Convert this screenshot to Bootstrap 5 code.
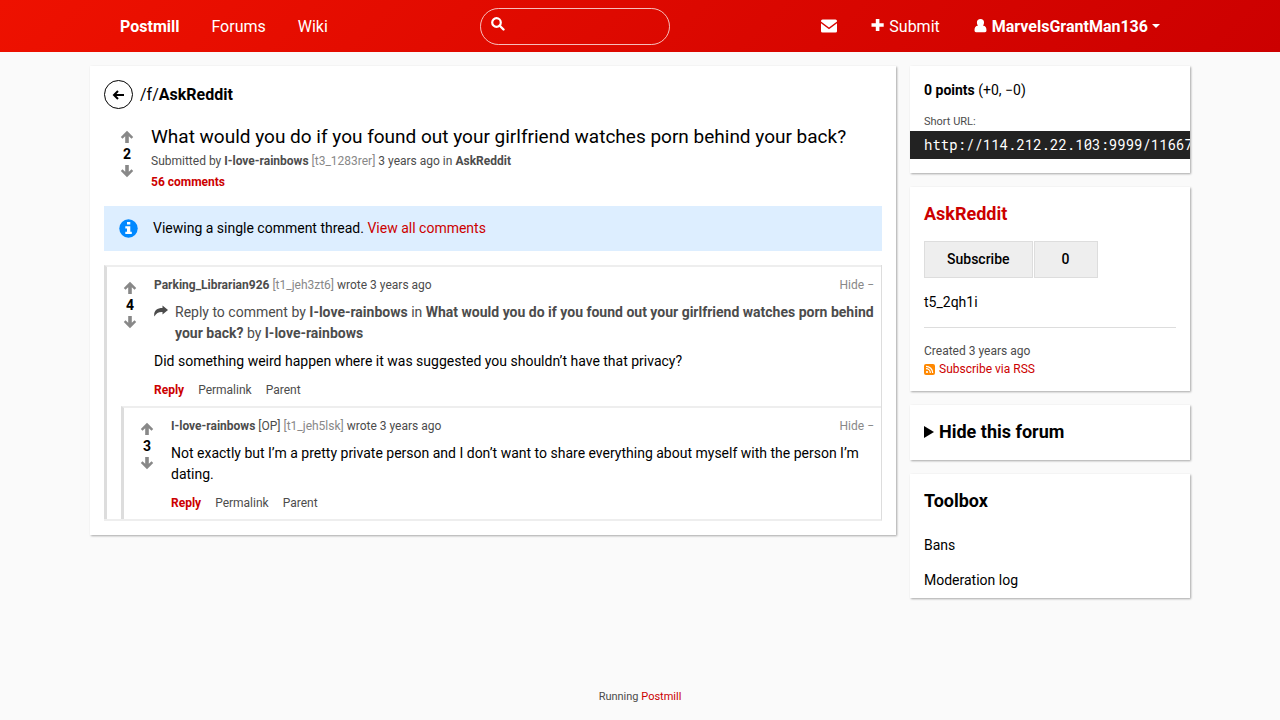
<!DOCTYPE html>
<html lang="en">
<head>
<meta charset="utf-8">
<meta name="viewport" content="width=device-width, initial-scale=1">
<title>AskReddit - Postmill</title>
<link href="https://cdn.jsdelivr.net/npm/bootstrap@5.3.0/dist/css/bootstrap.min.css" rel="stylesheet">
<style>
  body { font: 14px/21px Roboto, "Liberation Sans", sans-serif; color: #000; background: #fafafa; }
  a { color: #c00; text-decoration: none; }
  a:hover { text-decoration: underline; }
  b, strong { font-weight: 700; }
  svg { fill: currentColor; flex: none; }
  .wrap { max-width: 1100px; }
  .site-header { background: linear-gradient(135deg, #e10, #c00); font-size: 16px; min-height: 52px; }
  .site-header .wrap { padding: 7px 30px; min-height: 52px; }
  .site-header a, .user-btn { color: #fff; }
  .nav-left { gap: 32px; }
  .nav-right { gap: 34px; }
  .user-btn { background: none; border: 0; padding: 0; font-weight: 700; }
  .caret { border: 4px solid transparent; border-top-color: #fff; border-bottom: 0; margin-left: 4px; }
  .search-box { width: 190px; color: #fff; }
  .search-box input { height: 37px; border: 1px solid #fffb; border-radius: 19px; padding: 0 14px 0 36px; background: none; color: #fff; }
  .search-box svg { top: 9px; left: 11px; }
  .page { gap: 14px; padding-top: 14px; }
  .panel { background: #fff; box-shadow: 1px 1px 2px #0005; padding: 14px; }
  .side { gap: 14px; }
  .side h2, .side summary { font-size: 18px; line-height: 26px; font-weight: 700; margin: 0; }
  .side summary { list-style: none; display: flex; align-items: center; gap: 5px; padding-bottom: 1px; }
  .side summary::-webkit-details-marker { display: none; }
  .side summary::before { content: ""; border: 6px solid transparent; border-left: 10px solid #000; border-right: 0; }
  .back-btn { width: 29px; height: 29px; border: 1px solid #000; border-radius: 50%; }
  .crumb { font-size: 16px; gap: 7px; }
  .crumb a, .title a { color: #000; }
  .votes { color: #888; line-height: 18px; width: 18px; flex: none; }
  .votes button { border: 0; background: none; padding: 0; color: inherit; display: flex; height: 16px; align-items: center; }
  .votes b { color: #000; }
  .post { gap: 15px; padding: 14px 14px 15px; }
  .post .votes { padding-top: 6px; }
  .title { font-size: 19px; line-height: 27px; margin: 0 0 2px; font-weight: 400; }
  .meta { font-size: 12px; line-height: 18px; color: #4c4c4c; }
  .meta + .meta { margin-top: 3px; }
  .meta a, .reply-to a { color: #4c4c4c; }
  .meta .hot { color: #c00; font-weight: 700; }
  .meta .rss { color: #c00; }
  .faint, .meta a.faint { color: #888; }
  .notice { background: #def; padding: 12px 15px; gap: 15px; margin-bottom: 14px; }
  .comment { border-left: 3px solid #ddd; border-top: 2px solid #eee; }
  .thread { border-right: 1px solid #ddd; border-bottom: 2px solid #eee; }
  .comment-main { padding: 9px 7px 7px 14px; gap: 15px; }
  .comment-main .votes { padding-top: 4px; }
  .reply-to { color: #4c4c4c; gap: 7px; margin-top: 8px; }
  .reply-to svg { margin-top: 3px; }
  .reply-to + .text { margin-top: 7px; }
  .text { margin-top: 8px; }
  .acts { margin-top: 9px; gap: 14px; }
  .replies { padding-left: 14px; }
  .short-label { font-size: 11px; line-height: 18px; color: #4c4c4c; margin-top: 12px; }
  .short-url { background: #222; color: #fff; font: 14px/28px "Roboto Mono", "DejaVu Sans Mono", monospace; margin: 0 -14px; padding: 0 0 0 14px; border: 0; height: 28px; display: block; width: calc(100% + 28px); }
  .sub-row { gap: 1px; margin: 14px 0; }
  .sub-btn { background: #eee; border: 1px solid #ddd; font-weight: 500; height: 37px; padding: 0 22px; color: #000; }
  .sub-count { padding: 0 27px; border: 1px solid #ddd; background: #eee; font-weight: 500; line-height: 35px; }
  .side hr { border-color: #ddd; opacity: 1; margin: 14px 0; }
  .side .meta + .meta { margin-top: 0; }
  .about { padding-bottom: 13px; }
  .toolbox { padding-bottom: 7px; }
  .tools a { color: #000; }
  .tools { gap: 14px; margin-top: 21px; }
  .foot { font-size: 11px; line-height: 18px; color: #4c4c4c; padding: 14px 0; }
  @media (min-width: 992px) { .side { width: 280px; flex: none; } .page main { flex: 1; min-width: 0; } }
</style>
</head>
<body class="d-flex flex-column min-vh-100">
<svg class="d-none" xmlns="http://www.w3.org/2000/svg">
  <symbol id="up" viewBox="0 0 14 14"><path d="M7 .8 13.200 7l-1.700 1.700-2.700-2.400V13H5.200V6.300L2.500 8.700.8 7z"/></symbol>
  <symbol id="down" viewBox="0 0 14 14"><path d="M7 13.200.8 7l1.700-1.700 2.700 2.400V1h3.600v6.700l2.700-2.400L13.200 7z"/></symbol>
</svg>
<header class="site-header">
  <div class="wrap container-fluid d-flex flex-wrap align-items-center justify-content-between gap-2">
    <nav class="nav-left d-flex" aria-label="Main"><a href="#"><b>Postmill</b></a><a href="#">Forums</a><a href="#">Wiki</a></nav>
    <form class="search-box position-relative" role="search">
      <input class="w-100 d-block" type="search" aria-label="Search">
      <svg class="position-absolute" width="14" height="14" viewBox="0 0 14 14" aria-hidden="true"><circle cx="5.500" cy="5.500" r="4.300" fill="none" stroke="#fff" stroke-width="2.200"/><path d="m8.500 8.500 4 4" stroke="#fff" stroke-width="2.400" stroke-linecap="round"/></svg>
    </form>
    <div class="nav-right d-flex align-items-center">
      <a class="d-flex" href="#" aria-label="Messages"><svg width="16" height="14" viewBox="0 0 16 14"><path d="M1.500.5h13Q16 .5 16 2v.5L8 8.500 0 2.500V2Q0 .5 1.500.5zM0 4.200l8 6 8-6v8q0 1.300-1.500 1.300h-13Q0 13.500 0 12.200z"/></svg></a>
      <a class="d-flex align-items-center" href="#"><svg class="me-1" width="14" height="14" viewBox="0 0 14 14"><path d="M4.800 0h3.600v4.200h4.300v3.600H8.400V12H4.800V7.800H.5V4.200h4.300z"/></svg>Submit</a>
      <button class="user-btn d-flex align-items-center" type="button"><svg class="me-1" width="14" height="14" viewBox="0 0 14 14"><path d="M6.500 0c4.800 0 3.800 5.600 2.400 6.600 2.600.4 3.600 1.700 3.600 5q0 1.700-1.500 1.700H2Q.5 13.300.5 11.600c0-3.300 1-4.600 3.600-5C2.700 5.600 1.700 0 6.500 0z"/></svg>MarvelsGrantMan136<span class="caret"></span></button>
    </div>
  </div>
</header>

<div class="wrap page container-fluid px-0 d-flex flex-column flex-lg-row align-items-lg-start flex-grow-1">
  <main class="panel">
    <div class="crumb d-flex align-items-center">
      <a href="#" class="back-btn d-flex align-items-center justify-content-center" aria-label="Back"><svg width="13" height="12" viewBox="0 0 13 12"><path d="M12 6H2m4-4L2 6l4 4" fill="none" stroke="#000" stroke-width="2"/></svg></a>
      <a href="#">/f/<b>AskReddit</b></a>
    </div>
    <article class="post d-flex">
      <div class="votes d-flex flex-column align-items-center">
        <button type="button" aria-label="Upvote"><svg width="14" height="14"><use href="#up"/></svg></button><b>2</b><button type="button" aria-label="Downvote"><svg width="14" height="14"><use href="#down"/></svg></button>
      </div>
      <div>
        <h1 class="title"><a href="#">What would you do if you found out your girlfriend watches porn behind your back?</a></h1>
        <div class="meta">Submitted by <a href="#"><b>I-love-rainbows</b></a> <span class="faint">[t3_1283rer]</span> 3 years ago in <a href="#"><b>AskReddit</b></a></div>
        <div class="meta"><a class="hot" href="#">56 comments</a></div>
      </div>
    </article>
    <div class="notice d-flex align-items-center">
      <svg width="19" height="19" viewBox="0 0 19 19" aria-hidden="true"><circle cx="9.500" cy="9.500" r="9.200" fill="#08f"/><path d="M8 3h3.300v2.600H8zM6.300 7.300h5v5.500h1.500V15H6.300v-2.200H8V9.500H6.300z" fill="#fff"/></svg>
      <div>Viewing a single comment thread. <a href="#">View all comments</a></div>
    </div>
    <section class="thread">
      <article class="comment">
        <div class="comment-main d-flex">
          <div class="votes d-flex flex-column align-items-center">
            <button type="button" aria-label="Upvote"><svg width="14" height="14"><use href="#up"/></svg></button><b>4</b><button type="button" aria-label="Downvote"><svg width="14" height="14"><use href="#down"/></svg></button>
          </div>
          <div class="flex-grow-1">
            <div class="meta d-flex justify-content-between"><div><a href="#"><b>Parking_Librarian926</b></a> <span class="faint">[t1_jeh3zt6]</span> wrote 3 years ago</div><a class="faint" href="#">Hide −</a></div>
            <div class="reply-to d-flex"><svg width="14" height="14" viewBox="0 0 14 14" aria-hidden="true"><path d="M8.500.5 14 5 8.500 9.500V7C4.500 6.800 2.500 8 .3 11.500-.5 6 2.500 3 8.500 3z"/></svg><div>Reply to comment by <a href="#"><b>I-love-rainbows</b></a> in <a href="#"><b>What would you do if you found out your girlfriend watches porn behind your back?</b></a> by <a href="#"><b>I-love-rainbows</b></a></div></div>
            <div class="text">Did something weird happen where it was suggested you shouldn’t have that privacy?</div>
            <div class="meta acts d-flex"><a class="hot" href="#">Reply</a><a href="#">Permalink</a><a href="#">Parent</a></div>
          </div>
        </div>
        <div class="replies">
          <article class="comment">
            <div class="comment-main d-flex">
              <div class="votes d-flex flex-column align-items-center">
                <button type="button" aria-label="Upvote"><svg width="14" height="14"><use href="#up"/></svg></button><b>3</b><button type="button" aria-label="Downvote"><svg width="14" height="14"><use href="#down"/></svg></button>
              </div>
              <div class="flex-grow-1">
                <div class="meta d-flex justify-content-between"><div><a href="#"><b>I-love-rainbows</b></a> [OP] <span class="faint">[t1_jeh5lsk]</span> wrote 3 years ago</div><a class="faint" href="#">Hide −</a></div>
                <div class="text">Not exactly but I’m a pretty private person and I don’t want to share everything about myself with the person I’m dating.</div>
                <div class="meta acts d-flex"><a class="hot" href="#">Reply</a><a href="#">Permalink</a><a href="#">Parent</a></div>
              </div>
            </div>
          </article>
        </div>
      </article>
    </section>
  </main>

  <aside class="side d-flex flex-column">
    <section class="panel">
      <div><b>0 points</b> (+0, −0)</div>
      <label class="short-label d-block" for="short-url">Short URL:</label>
      <input class="short-url rounded-0" id="short-url" type="text" readonly value="http://114.212.22.103:9999/11667">
    </section>
    <section class="panel about">
      <h2><a href="#">AskReddit</a></h2>
      <div class="sub-row d-flex"><button class="sub-btn" type="button">Subscribe</button><span class="sub-count">0</span></div>
      <div>t5_2qh1i</div>
      <hr>
      <div class="meta">Created 3 years ago</div>
      <div class="meta d-flex align-items-center"><svg class="me-1" width="11" height="11" viewBox="0 0 11 11" aria-hidden="true"><rect width="11" height="11" rx="2" fill="#f80"/><circle cx="3" cy="8" r="1.100" fill="#fff"/><path d="M2 4.700A4.300 4.300 0 0 1 6.300 9M2 2.300A6.700 6.700 0 0 1 8.700 9" fill="none" stroke="#fff" stroke-width="1.200"/></svg><a class="rss" href="#">Subscribe via RSS</a></div>
    </section>
    <section class="panel">
      <details><summary>Hide this forum</summary><button class="btn btn-sm btn-outline-danger" type="button">Hide</button></details>
    </section>
    <section class="panel toolbox">
      <h2>Toolbox</h2>
      <nav class="tools d-flex flex-column" aria-label="Toolbox"><a href="#">Bans</a><a href="#">Moderation log</a></nav>
    </section>
  </aside>
</div>
<footer class="foot text-center">Running <a href="#">Postmill</a></footer>
<script src="https://cdn.jsdelivr.net/npm/bootstrap@5.3.0/dist/js/bootstrap.bundle.min.js"></script>
</body>
</html>
